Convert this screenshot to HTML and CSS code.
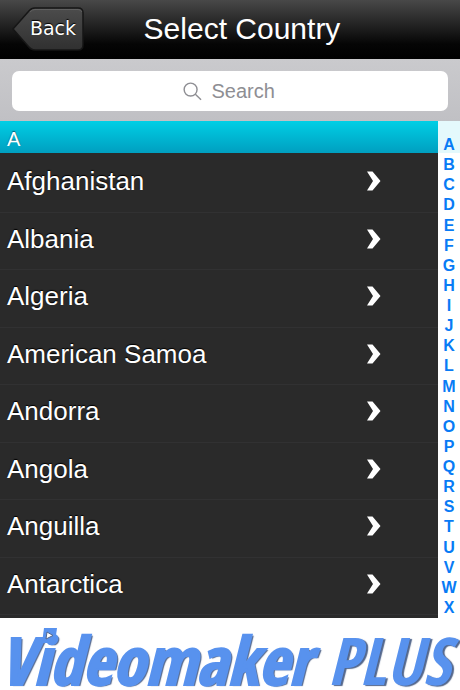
FILE: index.html
```html
<!DOCTYPE html>
<html lang="en">
<head>
<meta charset="utf-8">
<meta name="viewport" content="width=device-width, initial-scale=1">
<title>Select Country</title>
<link rel="stylesheet" href="styles.css">
</head>
<body>
<div class="app">
  <header class="navbar">
    <button class="back" type="button">
      <svg class="back-shape" viewBox="0 0 74 46" preserveAspectRatio="none" aria-hidden="true">
        <defs>
          <linearGradient id="back-fill" x1="0" y1="0" x2="0" y2="1">
            <stop offset="0" stop-color="#4c4c4c"/>
            <stop offset="1" stop-color="#303030"/>
          </linearGradient>
        </defs>
        <path d="M1 23 L16 6 Q19 2 23 2 H66 Q71 2 71 7 V39 Q71 44 66 44 H23 Q19 44 16 40 Z" fill="url(#back-fill)" stroke="#161616" stroke-width="1.5"/>
        <path d="M18 6 Q20 3.500 23 3.500 H66 Q69 3.500 70 6" fill="none" stroke="#606060"/>
      </svg>
      <span class="back-label">Back</span>
    </button>
    <h1 class="title">Select Country</h1>
  </header>
  <div class="search-bar">
    <label class="search">
      <svg class="search-icon" viewBox="0 0 20 20" aria-hidden="true">
        <circle cx="8" cy="8" r="6.8"/>
        <path d="M13 13 L19 18.6"/>
      </svg>
      <input class="search-input" type="search" placeholder="Search" aria-label="Search">
    </label>
  </div>
  <main class="content">
    <section class="countries">
      <h2 class="section-title">A</h2>
      <ul class="list">
        <li class="row"><a class="link" href="#">Afghanistan<svg class="chevron" viewBox="0 0 14 20"><path d="M0 0.5 H5.5 L13.5 10 L5.5 19.5 H0 L6 10 Z"/></svg></a></li>
        <li class="row"><a class="link" href="#">Albania<svg class="chevron" viewBox="0 0 14 20"><path d="M0 0.5 H5.5 L13.5 10 L5.5 19.5 H0 L6 10 Z"/></svg></a></li>
        <li class="row"><a class="link" href="#">Algeria<svg class="chevron" viewBox="0 0 14 20"><path d="M0 0.5 H5.5 L13.5 10 L5.5 19.5 H0 L6 10 Z"/></svg></a></li>
        <li class="row"><a class="link" href="#">American Samoa<svg class="chevron" viewBox="0 0 14 20"><path d="M0 0.5 H5.5 L13.5 10 L5.5 19.5 H0 L6 10 Z"/></svg></a></li>
        <li class="row"><a class="link" href="#">Andorra<svg class="chevron" viewBox="0 0 14 20"><path d="M0 0.5 H5.5 L13.5 10 L5.5 19.5 H0 L6 10 Z"/></svg></a></li>
        <li class="row"><a class="link" href="#">Angola<svg class="chevron" viewBox="0 0 14 20"><path d="M0 0.5 H5.5 L13.5 10 L5.5 19.5 H0 L6 10 Z"/></svg></a></li>
        <li class="row"><a class="link" href="#">Anguilla<svg class="chevron" viewBox="0 0 14 20"><path d="M0 0.5 H5.5 L13.5 10 L5.5 19.5 H0 L6 10 Z"/></svg></a></li>
        <li class="row"><a class="link" href="#">Antarctica<svg class="chevron" viewBox="0 0 14 20"><path d="M0 0.5 H5.5 L13.5 10 L5.5 19.5 H0 L6 10 Z"/></svg></a></li>
      </ul>
    </section>
    <nav class="index" aria-label="Letters">
      <a href="#">A</a><a href="#">B</a><a href="#">C</a><a href="#">D</a><a href="#">E</a><a href="#">F</a><a href="#">G</a><a href="#">H</a><a href="#">I</a><a href="#">J</a><a href="#">K</a><a href="#">L</a><a href="#">M</a><a href="#">N</a><a href="#">O</a><a href="#">P</a><a href="#">Q</a><a href="#">R</a><a href="#">S</a><a href="#">T</a><a href="#">U</a><a href="#">V</a><a href="#">W</a><a href="#">X</a>
    </nav>
  </main>
  <footer class="brand">
    <span class="brand-name">Videomaker<svg class="brand-play" viewBox="0 0 15 15" aria-hidden="true"><path d="M2 0 H15 L13 15 H0 Z" fill="#5892ee"/><path d="M5 4 L11 7.500 L4 11 Z" fill="#fff" stroke="#53678c"/></svg></span>
    <span class="brand-plus">PLUS</span>
  </footer>
</div>
</body>
</html>
```
FILE: styles.css
```css
* {
  box-sizing: border-box;
}

body {
  margin: 0;
  background: #fff;
  font-family: "Liberation Sans", Arial, sans-serif;
}

a {
  text-decoration: none;
}

.app {
  display: flex;
  flex-direction: column;
  min-height: 100vh;
}

.navbar {
  display: grid;
  grid-template-columns: 1fr auto 1fr;
  align-items: center;
  height: 59px;
  padding: 0 12px 2px;
  background: linear-gradient(#484848, #252525 40%, #050505 75%, #000);
}

.back {
  position: relative;
  justify-self: start;
  width: 74px;
  height: 46px;
  padding: 0 0 2px 8px;
  border: 0;
  background: none;
  color: #fff;
  font: 19px "DejaVu Sans", sans-serif;
  text-shadow: 0 -1px 1px #000;
}

.back-shape {
  position: absolute;
  inset: 0;
  width: 100%;
  height: 100%;
}

.back-label {
  position: relative;
}

.title {
  grid-column: 2;
  margin: 0 0 0 24px;
  color: #fff;
  font-size: 30px;
  font-weight: 400;
  line-height: 36px;
}

.search-bar {
  padding: 12px 12px 10px;
  background: linear-gradient(#cacacd, #c0c0c4);
}

.search {
  display: flex;
  align-items: center;
  justify-content: center;
  gap: 10px;
  height: 40px;
  border-radius: 7px;
  background: #fff;
}

.search-icon {
  width: 19px;
  height: 19px;
  fill: none;
  stroke: #8e8e93;
  stroke-width: 1.5;
}

.search-input {
  width: 66px;
  padding: 0;
  border: 0;
  outline: 0;
  background: none;
  color: #333;
  font: 20px "Liberation Sans", Arial, sans-serif;
}

.search-input::-webkit-search-cancel-button {
  display: none;
}

.search-input::placeholder {
  color: #8e8e93;
}

.content {
  display: flex;
  flex: 1;
}

.countries {
  display: flex;
  flex: 1;
  flex-direction: column;
  background: #2a2a2a;
}

.section-title {
  height: 32px;
  margin: 0;
  padding: 2px 7px 0;
  background: linear-gradient(#00cfe5, #009fc0);
  color: #fff;
  font-size: 20px;
  font-weight: 400;
  line-height: 32px;
  text-shadow: 0 -1px 1px #00607a;
}

.list {
  display: grid;
  flex: 1;
  grid-auto-rows: 1fr;
  margin: 0;
  padding: 2px 0 3px;
  list-style: none;
}

.row {
  display: grid;
  border-bottom: 1px solid #313132;
}

.link {
  display: flex;
  align-items: center;
  justify-content: space-between;
  padding: 0 57px 4px 7px;
  color: #fff;
  font-size: 26px;
  line-height: 30px;
  text-shadow: 0 -1px 1px #000;
}

.chevron {
  width: 14px;
  height: 20px;
  fill: #fff;
}

.index {
  display: grid;
  grid-auto-rows: 1fr;
  width: 22px;
  padding-top: 14px;
  background: linear-gradient(#e4f9fc 32px, #fff 32px);
}

.index a {
  display: grid;
  place-items: center;
  color: #087bf5;
  font-size: 16px;
  font-weight: 700;
  line-height: 18px;
}

.brand {
  display: flex;
  align-items: baseline;
  justify-content: space-between;
  height: 72px;
  padding: 10px 10px 0 0;
  color: #5892ee;
  font-family: "Open Sans Condensed", "Open Sans", sans-serif;
  font-size: 66px;
  font-style: italic;
  font-weight: 700;
  line-height: 62px;
  text-shadow: 2px 1px 1px #53678c;
}

.brand-name {
  position: relative;
  -webkit-text-stroke: 2px #5892ee;
}

.brand-play {
  position: absolute;
  top: 0;
  left: 42px;
  width: 15px;
  height: 15px;
}
```
